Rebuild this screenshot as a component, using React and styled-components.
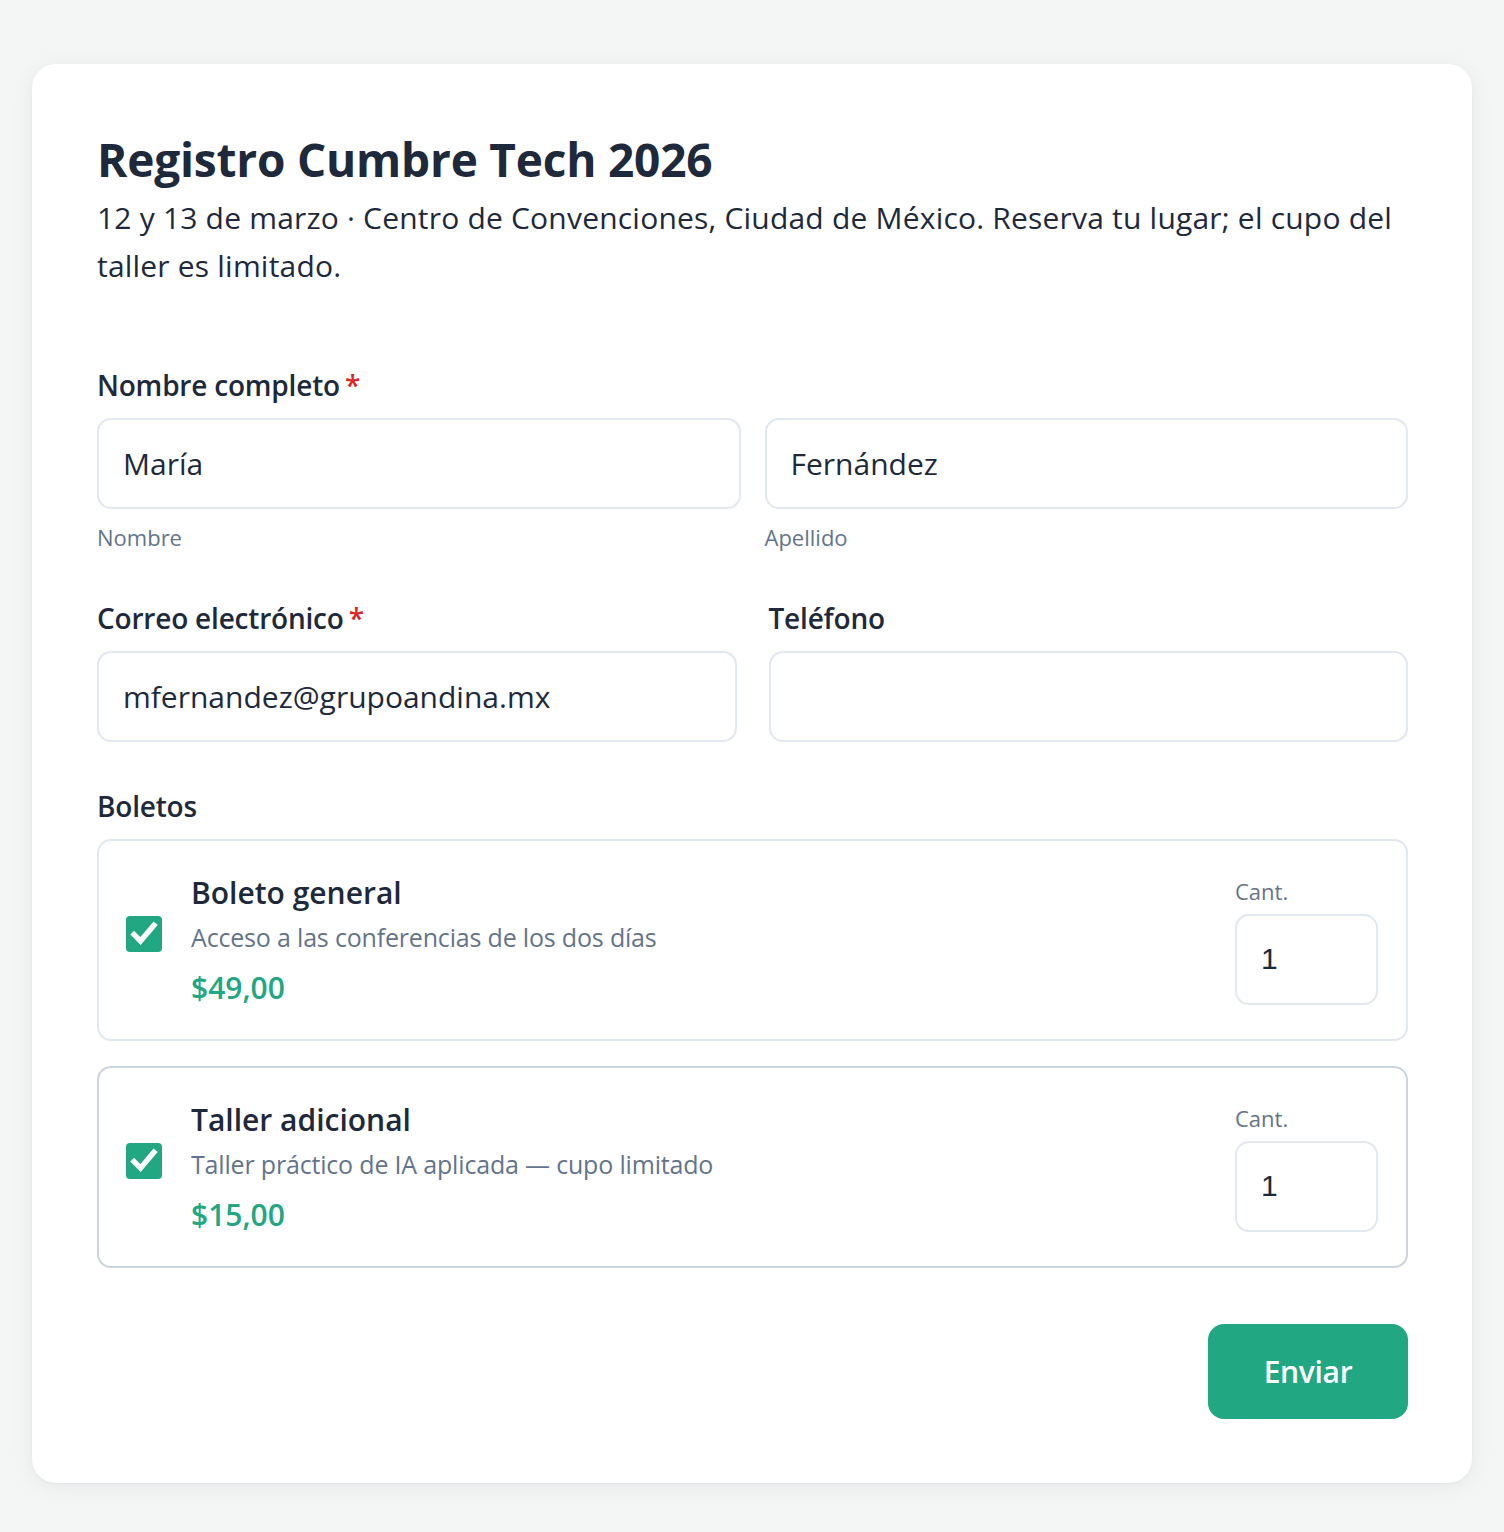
import React from "react";
import styled, { createGlobalStyle } from "styled-components";

const GlobalStyle = createGlobalStyle`
  * { box-sizing: border-box; }
  html, body { margin: 0; padding: 0; }
  body {
    background: #f4f5f5;
    font-family: "Open Sans", "Noto Sans", sans-serif;
    color: #1e293b;
  }
`;

const Page = styled.div`
  padding: 64px 32px 48px;
`;

const Card = styled.form`
  background: #ffffff;
  border-radius: 24px;
  box-shadow: 0 4px 24px rgba(15, 23, 42, 0.06), 0 1px 3px rgba(15, 23, 42, 0.04);
  padding: 64px 64px 64px 65px;
  display: flex;
  flex-direction: column;
`;

const Title = styled.h1`
  margin: 0 0 4px;
  font-size: 46px;
  line-height: 62px;
  font-weight: 700;
  color: #1e293b;
  letter-spacing: -0.2px;
`;

const Intro = styled.p`
  margin: 0 0 76px;
  font-size: 30px;
  line-height: 48px;
  color: #1e293b;
  letter-spacing: 0.2px;
`;

const Label = styled.div`
  font-size: 28px;
  font-weight: 600;
  line-height: 38px;
  color: #1e293b;
  margin-bottom: ${(p) => p.$mb ?? 14}px;
  letter-spacing: -0.2px;
`;

const Req = styled.span`
  color: #dc2626;
  margin-left: 5px;
`;

const Row = styled.div`
  display: grid;
  grid-template-columns: 1fr 1fr;
  column-gap: ${(p) => p.$gap}px;
  margin-bottom: ${(p) => p.$mb}px;
`;

const Field = styled.div`
  display: flex;
  flex-direction: column;
`;

const Input = styled.input`
  height: 91px;
  width: 100%;
  border: 2px solid #e2e8f0;
  border-radius: 14px;
  padding: 0 24px;
  font-family: inherit;
  font-size: 30px;
  color: #1e293b;
  background: #fff;
  outline: none;
`;

const Hint = styled.div`
  margin-top: 12px;
  font-size: 22px;
  line-height: 32px;
  color: #64748b;
`;

const Tickets = styled.div`
  display: flex;
  flex-direction: column;
  gap: 25px;
`;

const Ticket = styled.label`
  display: flex;
  align-items: center;
  border: 2px solid ${(p) => (p.$active ? "#cbd5e1" : "#e2e8f0")};
  border-radius: 14px;
  padding: 24px 28px 24px 27px;
  min-height: 202px;
`;

const Check = styled.span`
  width: 36px;
  height: 36px;
  border-radius: 4px;
  background: #22a783;
  display: flex;
  align-items: center;
  justify-content: center;
  flex-shrink: 0;
  margin: 0 29px 12px 0;
`;

const Info = styled.div`
  flex: 1;
  display: flex;
  flex-direction: column;
`;

const TicketName = styled.div`
  font-size: 30px;
  font-weight: 600;
  line-height: 42px;
  color: #1e293b;
`;

const TicketDesc = styled.div`
  font-size: 25px;
  line-height: 46px;
  color: #64748b;
  letter-spacing: -0.18px;
`;

const Price = styled.div`
  margin-top: 7px;
  font-size: 30px;
  font-weight: 600;
  line-height: 42px;
  color: #22a783;
`;

const Qty = styled.div`
  display: flex;
  flex-direction: column;
  width: 143px;
`;

const QtyLabel = styled.div`
  font-size: 22px;
  line-height: 30px;
  color: #64748b;
  margin-bottom: 8px;
`;

const QtyInput = styled(Input)`
  padding: 0 24px;
  font-family: "Liberation Sans", Arial, sans-serif;
`;

const Actions = styled.div`
  display: flex;
  justify-content: flex-end;
  margin-top: 56px;
`;

const Submit = styled.button`
  width: 200px;
  height: 95px;
  border: none;
  border-radius: 16px;
  background: #22a783;
  color: #ffffff;
  font-family: inherit;
  font-size: 30px;
  font-weight: 600;
  letter-spacing: -0.3px;
  cursor: pointer;
`;

const CheckMark = () => (
  <svg width="28" height="28" viewBox="0 0 24 24" fill="none">
    <path d="M3.5 12.5l5.5 5.5L20.5 4.5" stroke="#fff" strokeWidth="4.6" strokeLinecap="square" />
  </svg>
);

const tickets = [
  { name: "Boleto general", desc: "Acceso a las conferencias de los dos días", price: "$49,00", qty: 1 },
  { name: "Taller adicional", desc: "Taller práctico de IA aplicada — cupo limitado", price: "$15,00", qty: 1, active: true },
];

export default function App() {
  return (
    <>
      <GlobalStyle />
      <Page>
        <Card onSubmit={(e) => e.preventDefault()}>
          <Title>Registro Cumbre Tech 2026</Title>
          <Intro>
            12 y 13 de marzo · Centro de Convenciones, Ciudad de México. Reserva tu lugar; el cupo del taller es limitado.
          </Intro>

          <Label>
            Nombre completo<Req>*</Req>
          </Label>
          <Row $gap={24} $mb={46}>
            <Field>
              <Input defaultValue="María" />
              <Hint>Nombre</Hint>
            </Field>
            <Field>
              <Input defaultValue="Fernández" />
              <Hint>Apellido</Hint>
            </Field>
          </Row>

          <Row $gap={32} $mb={45}>
            <Field>
              <Label>
                Correo electrónico<Req>*</Req>
              </Label>
              <Input defaultValue="mfernandez@grupoandina.mx" />
            </Field>
            <Field>
              <Label>Teléfono</Label>
              <Input defaultValue="" />
            </Field>
          </Row>

          <Label $mb={14}>Boletos</Label>
          <Tickets>
            {tickets.map((t) => (
              <Ticket key={t.name} $active={t.active}>
                <Check>
                  <CheckMark />
                </Check>
                <Info>
                  <TicketName>{t.name}</TicketName>
                  <TicketDesc>{t.desc}</TicketDesc>
                  <Price>{t.price}</Price>
                </Info>
                <Qty>
                  <QtyLabel>Cant.</QtyLabel>
                  <QtyInput defaultValue={t.qty} />
                </Qty>
              </Ticket>
            ))}
          </Tickets>

          <Actions>
            <Submit type="submit">Enviar</Submit>
          </Actions>
        </Card>
      </Page>
    </>
  );
}
